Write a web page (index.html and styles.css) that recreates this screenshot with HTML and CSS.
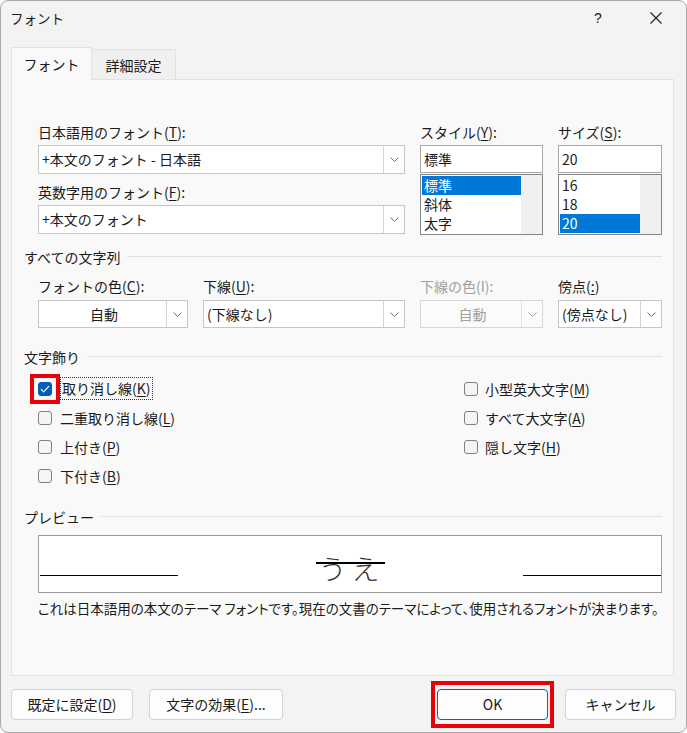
FILE: index.html
```html
<!DOCTYPE html>
<html lang="ja">
<head>
<meta charset="UTF-8" />
<title>フォント</title>
<link rel="stylesheet" href="styles.css">
</head>
<body>
<div class="dialog">
    <div class="titlebar">
        <span class="title">フォント</span>
        <span class="help">?</span>
        <span class="close">
            <svg width="12" height="12" viewBox="0 0 12 12"><path d="M.5.5l11 11M11.5.5l-11 11" stroke="#1b1b1b" stroke-width="1.1" fill="none"/></svg>
        </span>
    </div>

    <div class="tabs">
        <div class="tab active">フォント</div>
        <div class="tab">詳細設定</div>
    </div>

    <div class="panel">
        <!-- font / style / size -->
        <div class="font-grid">
            <div class="col">
                <span class="lbl">日本語用のフォント(<u>T</u>):</span>
                <div class="combo">
                    <span class="combo-text">+本文のフォント - 日本語</span>
                    <span class="combo-arrow"><svg width="9" height="5" viewBox="0 0 9 5"><path d="M.5.5l4 4 4-4" fill="none" stroke="#707070"/></svg></span>
                </div>
                <span class="lbl lbl-next">英数字用のフォント(<u>F</u>):</span>
                <div class="combo">
                    <span class="combo-text">+本文のフォント</span>
                    <span class="combo-arrow"><svg width="9" height="5" viewBox="0 0 9 5"><path d="M.5.5l4 4 4-4" fill="none" stroke="#707070"/></svg></span>
                </div>
            </div>
            <div class="col">
                <span class="lbl">スタイル(<u>Y</u>):</span>
                <div class="edit">標準</div>
                <div class="listbox">
                    <ul class="items items-style">
                        <li class="sel">標準</li>
                        <li>斜体</li>
                        <li>太字</li>
                    </ul>
                    <div class="scroll"></div>
                </div>
            </div>
            <div class="col">
                <span class="lbl">サイズ(<u>S</u>):</span>
                <div class="edit">20</div>
                <div class="listbox">
                    <ul class="items items-size">
                        <li>16</li>
                        <li>18</li>
                        <li class="sel">20</li>
                    </ul>
                    <div class="scroll"></div>
                </div>
            </div>
        </div>

        <div class="group-head">すべての文字列</div>
        <div class="all-grid">
            <div class="col">
                <span class="lbl">フォントの色(<u>C</u>):</span>
                <div class="combo short">
                    <span class="combo-text center">自動</span>
                    <span class="combo-arrow"><svg width="9" height="5" viewBox="0 0 9 5"><path d="M.5.5l4 4 4-4" fill="none" stroke="#707070"/></svg></span>
                </div>
            </div>
            <div class="col">
                <span class="lbl">下線(<u>U</u>):</span>
                <div class="combo short">
                    <span class="combo-text">(下線なし)</span>
                    <span class="combo-arrow"><svg width="9" height="5" viewBox="0 0 9 5"><path d="M.5.5l4 4 4-4" fill="none" stroke="#707070"/></svg></span>
                </div>
            </div>
            <div class="col disabled">
                <span class="lbl">下線の色(I):</span>
                <div class="combo short">
                    <span class="combo-text center">自動</span>
                    <span class="combo-arrow"><svg width="9" height="5" viewBox="0 0 9 5"><path d="M.5.5l4 4 4-4" fill="none" stroke="#a0a0a0"/></svg></span>
                </div>
            </div>
            <div class="col">
                <span class="lbl">傍点(<u>:</u>)</span>
                <div class="combo short">
                    <span class="combo-text">(傍点なし)</span>
                    <span class="combo-arrow"><svg width="9" height="5" viewBox="0 0 9 5"><path d="M.5.5l4 4 4-4" fill="none" stroke="#707070"/></svg></span>
                </div>
            </div>
        </div>

        <div class="group-head">文字飾り</div>
        <div class="effects">
            <div class="effects-col left">
                <div class="check">
                    <span class="mark"><span class="box checked"><svg width="10" height="8" viewBox="0 0 10 8"><path d="M1 4.2l2.6 2.6L9 1.2" fill="none" stroke="#fff" stroke-width="1.2"/></svg></span></span>
                    <span class="focus">取り消し線(<u>K</u>)</span>
                </div>
                <div class="check"><span class="box"></span><span>二重取り消し線(<u>L</u>)</span></div>
                <div class="check"><span class="box"></span><span>上付き(<u>P</u>)</span></div>
                <div class="check"><span class="box"></span><span>下付き(<u>B</u>)</span></div>
            </div>
            <div class="effects-col">
                <div class="check"><span class="box"></span><span>小型英大文字(<u>M</u>)</span></div>
                <div class="check"><span class="box"></span><span>すべて大文字(<u>A</u>)</span></div>
                <div class="check"><span class="box"></span><span>隠し文字(<u>H</u>)</span></div>
            </div>
        </div>

        <div class="group-head">プレビュー</div>
        <div class="preview">
            <span class="base"></span>
            <span class="sample">うえ</span>
            <span class="base"></span>
        </div>
        <p class="note">これは日本語用の本文のテーマ フォントです。現在の文書のテーマによって、使用されるフォントが決まります。</p>
    </div>

    <div class="footer">
        <button class="btn btn-default">既定に設定(<u>D</u>)</button>
        <button class="btn btn-effect">文字の効果(<u>E</u>)...</button>
        <span class="frame"><button class="btn btn-ok">OK</button></span>
        <button class="btn btn-cancel">キャンセル</button>
    </div>
</div>
</body>
</html>
```

FILE: styles.css
```css
* {
    box-sizing: border-box;
}

body {
    margin: 0;
    font-family: "Noto Sans CJK JP", "Noto Sans", sans-serif;
    font-size: 14px;
    color: #1b1b1b;
    background: #ffffff;
}

u {
    text-decoration-thickness: 1px;
    text-underline-offset: 2px;
}

.dialog {
    width: 687px;
    height: 733px;
    border: 1px solid #a9a9a9;
    border-radius: 8px;
    background: #f3f3f3;
    display: flex;
    flex-direction: column;
    overflow: hidden;
}

/* title bar */
.titlebar {
    height: 46px;
    display: flex;
    align-items: flex-start;
    padding-right: 7px;
}

.title {
    margin: 7px 0 0 9px;
    font-size: 13.5px;
    line-height: 20px;
}

.help {
    margin-left: auto;
    margin-top: 7px;
    width: 46px;
    text-align: center;
    line-height: 20px;
    font-family: "Liberation Sans", sans-serif;
    font-size: 14px;
}

.close {
    margin-left: 12px;
    width: 46px;
    height: 34px;
    display: flex;
    justify-content: center;
    padding-top: 11px;
}

/* tabs */
.tabs {
    display: flex;
    margin-left: 10px;
    height: 33px;
    margin-bottom: -1px;
}

.tab {
    width: 84px;
    height: 30px;
    margin-top: 2px;
    background: #f0f0f0;
    border: 1px solid #e2e2e2;
    border-left: none;
    border-bottom: none;
    display: flex;
    align-items: center;
    justify-content: center;
}

.tab.active {
    width: 81px;
    height: 33px;
    margin-top: 0;
    background: #f9f9f9;
    border-left: 1px solid #e2e2e2;
    position: relative;
    z-index: 1;
}

/* main panel */
.panel {
    margin: 0 12px 0 10px;
    height: 597px;
    border: 1px solid #e2e2e2;
    background: #f9f9f9;
    padding: 0 11px 0 12px;
}

.col {
    display: flex;
    flex-direction: column;
}

.lbl {
    display: block;
    height: 22px;
    line-height: 22px;
    white-space: nowrap;
}

.lbl-next {
    margin-top: 7px;
}

.font-grid {
    display: grid;
    grid-template-columns: 367px 123px 104px;
    column-gap: 15px;
    margin: 41px 0 0 14px;
}

.combo {
    margin-top: 2px;
    height: 29px;
    border: 1px solid #c6c6c6;
    background: #fff;
    display: flex;
}

.combo.short {
    margin-top: 3px;
    height: 28px;
}

.combo-text {
    flex: 1;
    padding-left: 3px;
    line-height: 26px;
    white-space: nowrap;
}

.combo-text.center {
    text-align: center;
}

.combo-arrow {
    width: 21px;
    border-left: 1px solid #d4d4d4;
    display: flex;
    align-items: center;
    justify-content: center;
}

.edit {
    margin-top: 2px;
    height: 28px;
    border: 1px solid #a8a8a8;
    background: #fff;
    padding-left: 3px;
    line-height: 26px;
}

.listbox {
    margin-top: 1px;
    height: 61px;
    border: 1px solid #858585;
    background: #fff;
    display: flex;
    padding-left: 1px;
}

.items {
    list-style: none;
    margin: 0;
    padding: 1px 0 0;
}

.items-style {
    width: 99px;
}

.items-size {
    width: 80px;
}

.items li {
    height: 19px;
    line-height: 19px;
    padding-left: 2px;
}

.items li.sel {
    background: #0078d7;
    color: #fff;
}

.scroll {
    flex: 1;
    background: #f0f0f0;
}

/* group headings with rule */
.group-head {
    display: flex;
    align-items: center;
    height: 22px;
    margin-top: 11px;
}

.group-head::after {
    content: "";
    flex: 1;
    height: 1px;
    margin: -1px 0 0 7px;
    background: #e0e0e0;
}

.all-grid {
    display: grid;
    grid-template-columns: 150px 202px 123px 104px;
    column-gap: 15px;
    margin: 7px 0 0 14px;
}

.disabled {
    color: #a0a0a0;
}

.disabled .combo {
    border-color: #d6d6d6;
    background: #fbfbfb;
}

.disabled .combo-arrow {
    border-left-color: #e2e2e2;
}

.all-grid + .group-head {
    margin-top: 18px;
}

/* checkboxes */
.effects {
    display: flex;
    margin: 6px 0 0 14px;
}

.effects-col.left {
    width: 426px;
}

.check {
    display: flex;
    align-items: center;
    height: 29px;
    white-space: nowrap;
}

.box {
    width: 14px;
    height: 14px;
    border: 1px solid #808080;
    border-radius: 3px;
    background: #f5f5f5;
    margin-right: 8px;
    display: flex;
    align-items: center;
    justify-content: center;
}

.effects-col + .effects-col .box {
    margin-right: 7px;
}

.box.checked {
    background: #005fb8;
    border-color: #005fb8;
}

.mark {
    display: inline-flex;
    outline: 4px solid #e8000b;
    outline-offset: 4px;
    margin-right: 8px;
}

.mark .box {
    margin-right: 0;
}

.focus {
    border: 1px dotted #333;
    padding: 0 1px;
    line-height: 21px;
}

.effects + .group-head {
    margin-top: 16px;
}

/* preview */
.preview {
    margin: 7px 0 0 14px;
    height: 58px;
    border: 1px solid #9c9c9c;
    background: #fff;
    display: flex;
    justify-content: space-between;
    align-items: flex-end;
}

.base {
    width: 138px;
    height: 1px;
    background: #000;
    margin-bottom: 16px;
}

.base:first-child {
    margin-left: 1px;
}

.sample {
    font-size: 28px;
    line-height: 36px;
    letter-spacing: 5px;
    font-weight: 300;
    color: #333;
    margin-bottom: 6px;
    padding-left: 2px;
    background: linear-gradient(#000, #000) no-repeat 0 12px / 100% 2px;
}

.note {
    margin: 4px 0 0 14px;
    line-height: 22px;
    font-size: 13.5px;
    font-feature-settings: "palt";
    white-space: nowrap;
}

/* footer buttons */
.footer {
    height: 56px;
    display: flex;
    align-items: center;
    padding: 0 10px;
}

.btn {
    height: 31px;
    border: 1px solid #d2d2d2;
    border-radius: 4px;
    background: #fdfdfd;
    font-family: inherit;
    font-size: 14px;
    color: #1b1b1b;
    padding: 0;
}

.btn-default {
    width: 122px;
}

.btn-effect {
    width: 134px;
    margin-left: 16px;
}

.frame {
    margin-left: auto;
    border: 4px solid #e8000b;
    padding: 4px 2px;
    display: flex;
}

.btn-ok {
    width: 111px;
    border-color: #0067c0;
}

.btn-cancel {
    width: 111px;
    margin-left: 11px;
}
```
